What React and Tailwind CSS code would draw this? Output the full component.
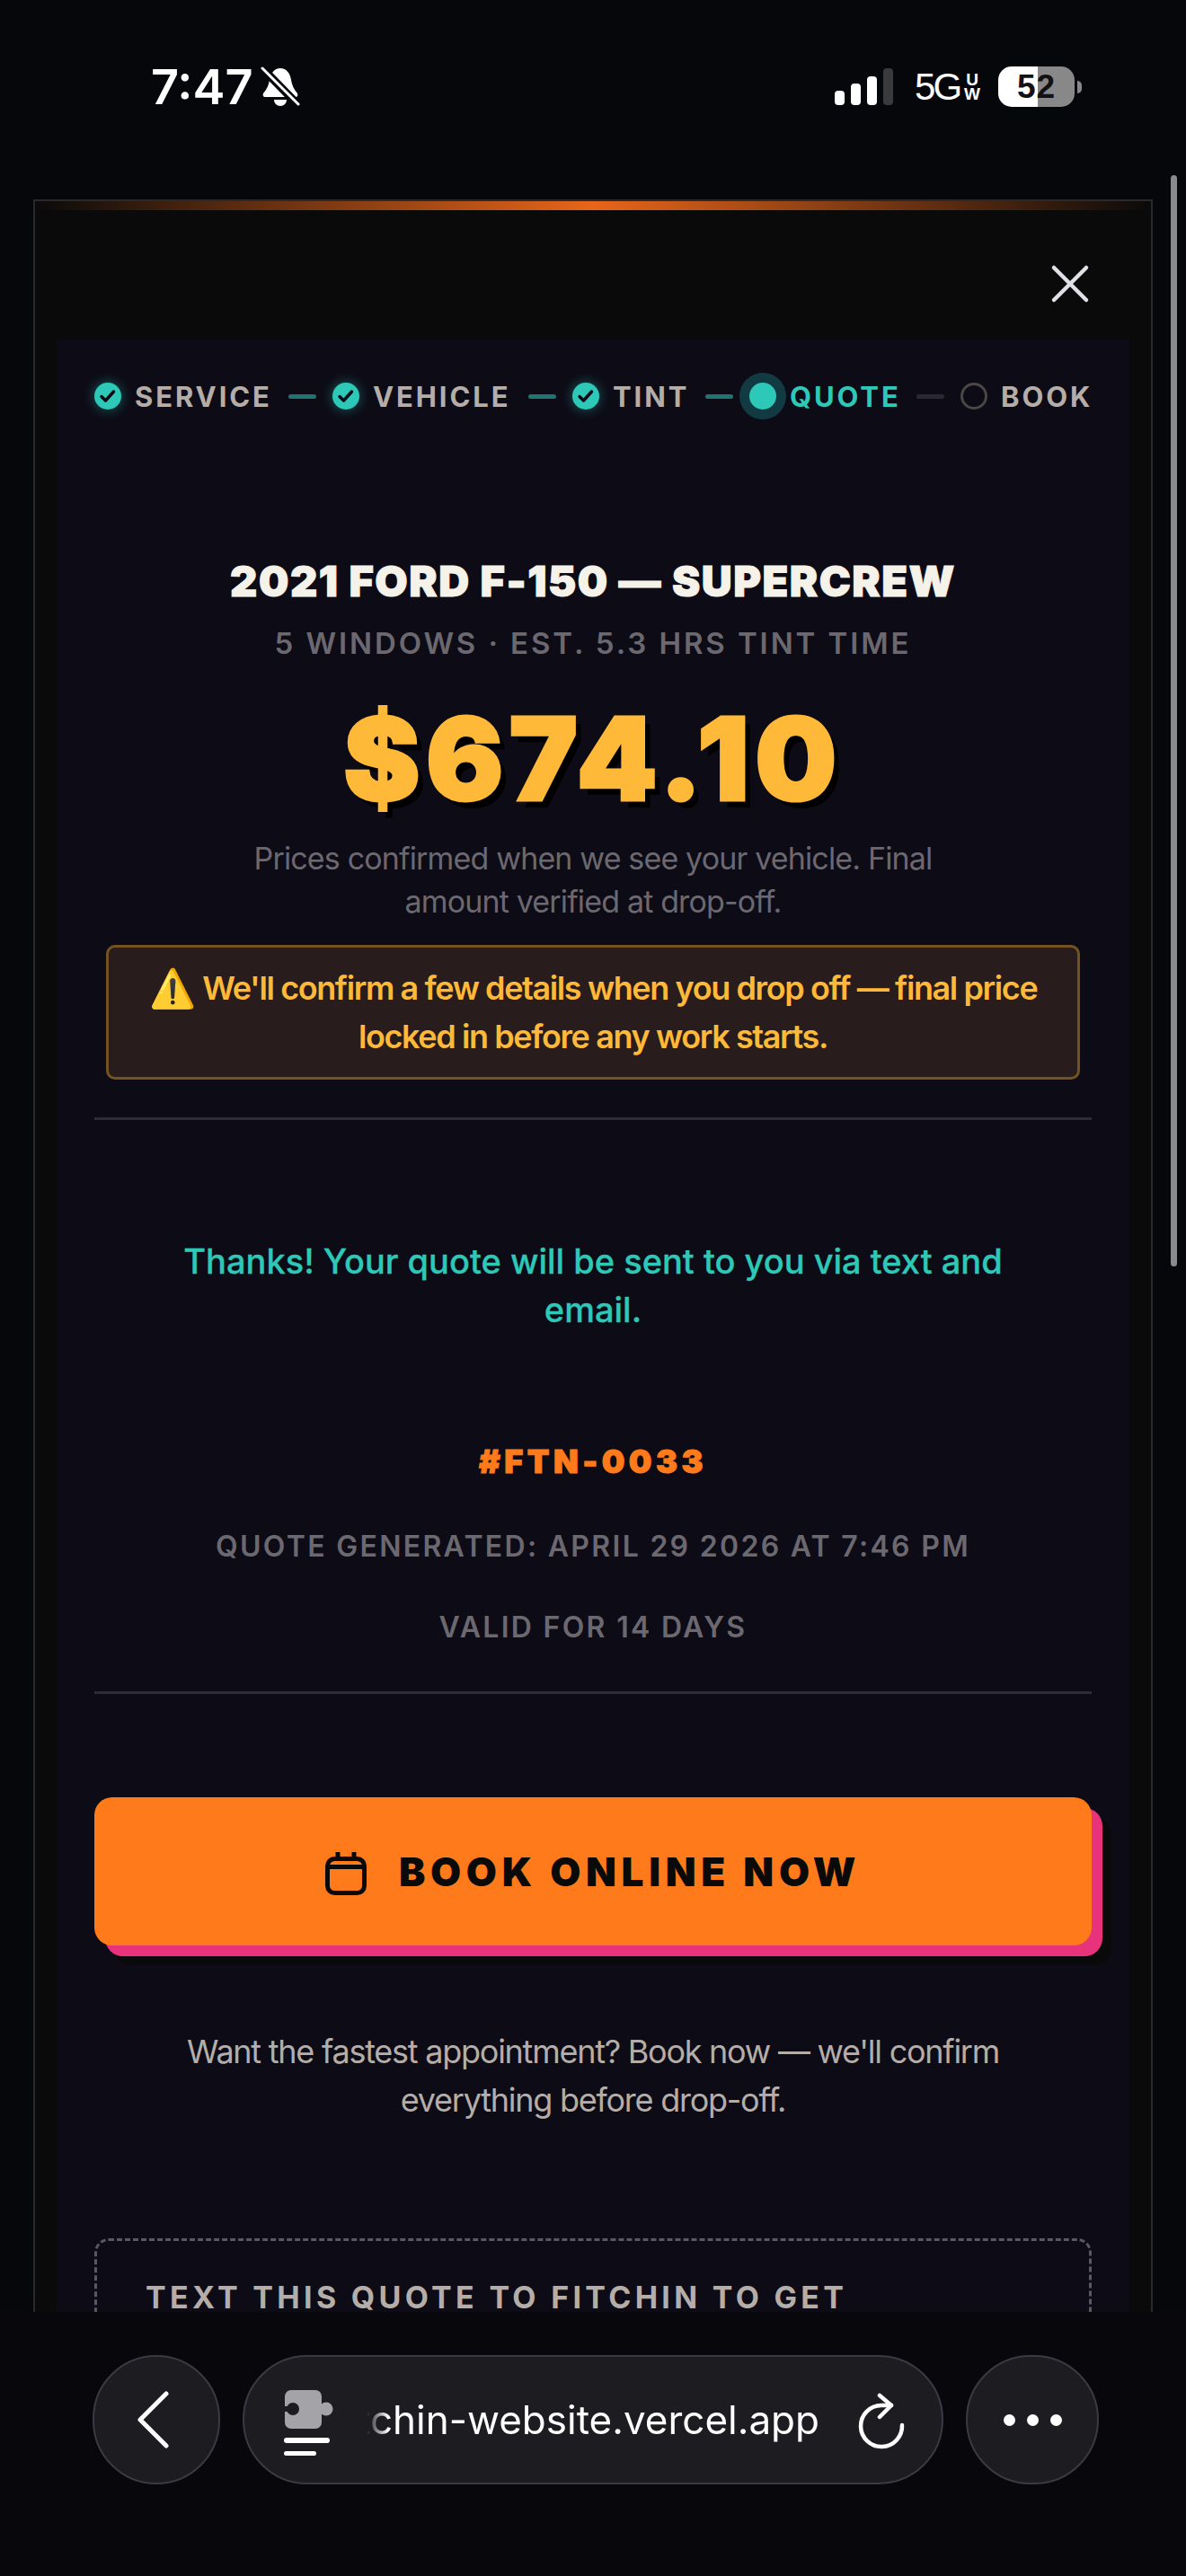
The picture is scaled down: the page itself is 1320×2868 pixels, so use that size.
const steps = [
  { label: 'SERVICE', state: 'done', w: 'w-[151px]' },
  { label: 'VEHICLE', state: 'done', w: 'w-[153px]' },
  { label: 'TINT', state: 'done', w: 'w-[83px]' },
  { label: 'QUOTE', state: 'current', w: 'w-[121px]' },
  { label: 'BOOK', state: 'todo', w: 'w-[100px]' },
];

function StepDot({ state }) {
  if (state === 'current') {
    return <span className="block w-[30px] h-[30px] rounded-full bg-[#2dc8b8] shadow-[0_0_0_11px_#123a42]" />;
  }
  if (state === 'todo') {
    return <span className="block w-[30px] h-[30px] rounded-full border-[3px] border-[#4a4745]" />;
  }
  return (
    <span className="block w-[30px] h-[30px] rounded-full bg-[#2dc8b8] shadow-[0_0_14px_#2dc8b877]">
      <svg width="30" height="30" viewBox="0 0 30 30" fill="none" stroke="#0c0a15" strokeWidth="3.5" strokeLinecap="round" strokeLinejoin="round">
        <path d="M8 15.5l4.5 4.5 9-10" />
      </svg>
    </span>
  );
}

function Stepper() {
  return (
    <div className="flex items-center h-[30px] ml-[42px]">
      {steps.map((step, i) => (
        <div key={step.label} className="flex items-center">
          <StepDot state={step.state} />
          <span
            className={`ml-[15px] ${step.w} whitespace-nowrap text-[31px] leading-none font-bold tracking-[2.9px] ${
              step.state === 'current' ? 'text-[#2dc8b8]' : 'text-[#b5aea8]'
            }`}
          >
            {step.label}
          </span>
          {i < steps.length - 1 && (
            <span className={`block w-[31px] h-[5px] ml-[20px] mr-[18px] rounded-full ${i === 3 ? 'bg-[#2a2833]' : 'bg-[#1f7472]'}`} />
          )}
        </div>
      ))}
    </div>
  );
}

function StatusBar() {
  return (
    <div className="h-[222px] shrink-0 relative">
      <div className="flex items-center h-[45px] pt-[74px] pl-[168px] pr-[116px] box-content justify-between">
        <div className="flex items-center gap-[8px] text-white">
          <span className="text-[54px] leading-none font-semibold">7:47</span>
          <svg width="44" height="46" viewBox="0 0 44 46" fill="white">
            <path d="M22 2c7 0 11 6 12 13 1 6 3 10 7 15 1 2 0 4-2 4H5c-2 0-3-2-2-4 4-5 6-9 7-15C11 8 15 2 22 2z" />
            <path d="M15 37h14c0 4-3 7-7 7s-7-3-7-7z" />
            <path d="M1 1l41 42" stroke="#06070b" strokeWidth="9" />
            <path d="M2 2l40 40" stroke="white" strokeWidth="3" strokeLinecap="round" />
          </svg>
        </div>
        <div className="flex items-center text-white">
          <div className="flex items-end gap-[7px] h-[41px]">
            <span className="block w-[11px] h-[16px] rounded-[4px] bg-white" />
            <span className="block w-[11px] h-[24px] rounded-[4px] bg-white" />
            <span className="block w-[11px] h-[32px] rounded-[4px] bg-white" />
            <span className="block w-[11px] h-[41px] rounded-[4px] bg-[#3a3a3c]" />
          </div>
          <span className="ml-[24px] text-[42px] leading-none font-normal tracking-[-3px] font-['Liberation_Sans',sans-serif]">5G</span>
          <span className="ml-[5px] flex flex-col items-center text-[19px] leading-[16px] font-bold font-['Liberation_Sans',sans-serif]">
            <span>U</span>
            <span>W</span>
          </span>
          <div className="ml-[20px] w-[85px] h-[45px] rounded-[15px] bg-[linear-gradient(90deg,#ffffff_52%,#888888_52%)] flex items-center justify-center text-[#111116] text-[37px] leading-none font-bold tracking-[1px] font-['Liberation_Sans',sans-serif]">
            52
          </div>
          <span className="ml-[3px] block w-[5px] h-[14px] rounded-r-full bg-[#888888]" />
        </div>
      </div>
    </div>
  );
}

function QuotePanel() {
  return (
    <div className="mx-[24px] h-full bg-[#0d0b16] pt-[48px] text-center">
      <Stepper />
      <h2 className="mt-[167px] text-[47px] leading-[48px] font-black tracking-[1.5px] text-[#f5f2ea] [-webkit-text-stroke:1px_#f5f2ea]">
        2021 FORD F-150 — SUPERCREW
      </h2>
      <p className="mt-[25px] text-[33px] leading-[40px] font-semibold tracking-[2.9px] text-[#6b6870]">
        5 WINDOWS · EST. 5.3 HRS TINT TIME
      </p>
      <div className="mt-[34px] text-[128px] leading-[150px] font-black text-[#ffb938] [-webkit-text-stroke:3px_#ffb938] [text-shadow:7px_8px_0_#000000] tracking-[6.4px]">
        $674.10
      </div>
      <p className="mt-[12px] mx-auto w-[800px] text-[34px] leading-[48px] text-[#6b6870] tracking-[-0.85px]">
        Prices confirmed when we see your vehicle. Final amount verified at drop-off.
      </p>
      <div className="mt-[24px] mx-[55px] h-[150px] rounded-[10px] border-[3px] border-[#735322] bg-[#281d1c] flex items-center justify-center text-[36px] leading-[54px] font-semibold text-[#ffb938] tracking-[-1.4px] px-[20px]">
        <p>
          <span className="text-[42px] leading-[42px] align-[-2px] tracking-normal">⚠️</span> We'll confirm a few details when you drop off — final price locked in before any work starts.
        </p>
      </div>
      <div className="mt-[42px] mx-[42px] h-[3px] bg-[#2e2c38]" />
      <p className="mt-[130px] mx-auto w-[960px] text-[38px] leading-[54px] font-medium text-[#2dc8b8] [-webkit-text-stroke:0.3px_#2dc8b8]">
        Thanks! Your quote will be sent to you via text and email.
      </p>
      <p className="mt-[122px] text-[36px] leading-[40px] font-black tracking-[4.5px] text-[#ff7a1a] [-webkit-text-stroke:1px_#ff7a1a]">#FTN-0033</p>
      <p className="mt-[55px] text-[32px] leading-[40px] font-semibold tracking-[2.3px] text-[#6b6870]">
        QUOTE GENERATED: APRIL 29 2026 AT 7:46 PM
      </p>
      <p className="mt-[50px] text-[32px] leading-[40px] font-semibold tracking-[2.3px] text-[#6b6870]">
        VALID FOR 14 DAYS
      </p>
      <div className="mt-[51px] mx-[42px] h-[3px] bg-[#2e2c38]" />
      <button className="mt-[115px] mx-[42px] w-[1110px] h-[165px] rounded-[20px] bg-[#ff7a1a] shadow-[12px_12px_0_#e8327c,22px_22px_0_#0a0a0a] flex items-center justify-center gap-[36px] text-[#0a0a0a]">
        <svg width="46" height="48" viewBox="0 0 46 48" fill="none" stroke="#0a0a0a" strokeWidth="5" className="mt-[5px]">
          <rect x="2.5" y="7.5" width="41" height="38" rx="8" />
          <path d="M2 16.5h42M14 0v8M32 0v8" />
        </svg>
        <span className="text-[44px] leading-none font-black tracking-[5.7px]">BOOK ONLINE NOW</span>
      </button>
      <p className="mt-[91px] mx-auto w-[960px] text-[36px] leading-[54px] text-[#b5aea8] tracking-[-1.25px]">
        Want the fastest appointment? Book now — we'll confirm everything before drop-off.
      </p>
      <div className="mt-[127px] mx-[42px] h-[200px] rounded-[16px] border-[3px] border-dashed border-[#5a5860] pt-[48px] pl-[54px] text-left">
        <p className="text-[34px] leading-[30px] font-bold tracking-[4.3px] text-[#b5aea8]">TEXT THIS QUOTE TO FITCHIN TO GET</p>
      </div>
    </div>
  );
}

function BottomBar() {
  return (
    <div className="h-[294px] shrink-0 bg-[#08080c] pt-[48px] pl-[103px] flex items-start">
      <div className="w-[142px] h-[144px] rounded-full bg-[#1c1c21] border-2 border-[#3a3a44] flex items-center justify-center">
        <svg width="40" height="64" viewBox="0 0 40 64" fill="none" stroke="white" strokeWidth="5" strokeLinecap="round" strokeLinejoin="round" className="-ml-[6px]">
          <path d="M34 3L5 32l29 29" />
        </svg>
      </div>
      <div className="ml-[25px] w-[780px] h-[144px] rounded-full bg-[#1c1c21] border-2 border-[#3a3a44] flex items-center pl-[44px]">
        <svg width="56" height="76" viewBox="0 0 56 76" className="shrink-0 mt-[8px]">
          <rect x="1" y="1" width="41" height="43" rx="7" fill="#a4a4a8" />
          <circle cx="47" cy="22" r="7.5" fill="#a4a4a8" />
          <circle cx="10" cy="22" r="7" fill="#1c1c21" />
          <rect x="0" y="19" width="6" height="6" fill="#1c1c21" />
          <rect x="0" y="54" width="51" height="6" rx="3" fill="white" />
          <rect x="0" y="69" width="36" height="5" rx="2.5" fill="white" />
        </svg>
        <div className="ml-[36px] w-[504px] flex justify-end overflow-hidden text-[44px] leading-[52px] text-white whitespace-nowrap [mask-image:linear-gradient(90deg,transparent,#000_24px)]">
          <span className="shrink-0">fitchin-website.vercel.app</span>
        </div>
        <svg width="56" height="64" viewBox="0 0 56 64" fill="none" stroke="white" strokeWidth="4.5" strokeLinecap="round" strokeLinejoin="round" className="ml-[41px] shrink-0 mt-[4px]">
          <path d="M39 14H28A23 23 0 1 0 51 36" />
          <path d="M26 3l13 11-13 13" />
        </svg>
      </div>
      <div className="ml-[25px] w-[148px] h-[144px] rounded-full bg-[#1c1c21] border-2 border-[#3a3a44] flex items-center justify-center gap-[13px]">
        <span className="block w-[13px] h-[13px] rounded-full bg-white" />
        <span className="block w-[13px] h-[13px] rounded-full bg-white" />
        <span className="block w-[13px] h-[13px] rounded-full bg-white" />
      </div>
    </div>
  );
}

export default function App() {
  return (
    <div className="relative w-[1320px] h-[2868px] flex flex-col overflow-hidden bg-[#06070b] font-['Inter',sans-serif]">
      <StatusBar />
      <div className="flex-1 min-h-0 overflow-hidden">
        <div className="ml-[37px] w-[1246px] h-[2400px] bg-[#0a0a0a] border-2 border-[#2a2a2a]">
          <div className="h-[10px] bg-gradient-to-r from-transparent via-[#e8651a] to-transparent" />
          <div className="h-[144px] flex justify-end pt-[60px] pr-[68px]">
            <svg width="44" height="44" viewBox="0 0 44 44" fill="none" stroke="#dfe1e6" strokeWidth="4.5" strokeLinecap="round">
              <path d="M4 4l36 36M40 4L4 40" />
            </svg>
          </div>
          <QuotePanel />
        </div>
      </div>
      <BottomBar />
      {/* page scrollbar, sits over the page */}
      <div className="absolute left-[1303px] top-[195px] w-[7px] h-[1215px] rounded-full bg-[#8a8a8c]" />
    </div>
  );
}
